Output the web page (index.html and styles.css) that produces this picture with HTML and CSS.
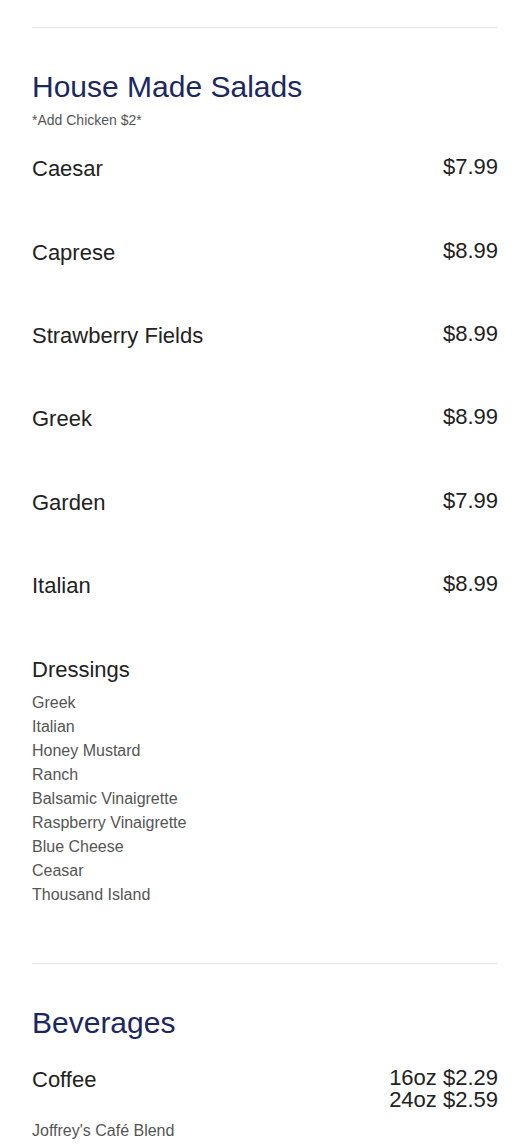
FILE: index.html
```html
<!DOCTYPE html>
<html lang="en">
<head>
  <meta charset="UTF-8">
  <meta name="viewport" content="width=device-width, initial-scale=1.0">
  <title>Menu</title>
  <link rel="stylesheet" href="styles.css">
</head>
<body>
  <div class="menu">
    <section class="menu-section">
      <div class="section-head">
        <h2 class="section-title">House Made Salads</h2>
        <p class="section-note">*Add Chicken $2*</p>
      </div>
      <div class="item">
        <div class="item-head"><h3 class="item-name">Caesar</h3><div class="item-price">$7.99</div></div>
      </div>
      <div class="item">
        <div class="item-head"><h3 class="item-name">Caprese</h3><div class="item-price">$8.99</div></div>
      </div>
      <div class="item">
        <div class="item-head"><h3 class="item-name">Strawberry Fields</h3><div class="item-price">$8.99</div></div>
      </div>
      <div class="item">
        <div class="item-head"><h3 class="item-name">Greek</h3><div class="item-price">$8.99</div></div>
      </div>
      <div class="item">
        <div class="item-head"><h3 class="item-name">Garden</h3><div class="item-price">$7.99</div></div>
      </div>
      <div class="item">
        <div class="item-head"><h3 class="item-name">Italian</h3><div class="item-price">$8.99</div></div>
      </div>
      <div class="item">
        <div class="item-head"><h3 class="item-name">Dressings</h3></div>
        <div class="item-desc">
          Greek<br>
          Italian<br>
          Honey Mustard<br>
          Ranch<br>
          Balsamic Vinaigrette<br>
          Raspberry Vinaigrette<br>
          Blue Cheese<br>
          Ceasar<br>
          Thousand Island
        </div>
      </div>
    </section>

    <section class="menu-section">
      <div class="section-head">
        <h2 class="section-title">Beverages</h2>
      </div>
      <div class="item">
        <div class="item-head">
          <h3 class="item-name">Coffee</h3>
          <div class="item-price">16oz $2.29<br>24oz $2.59</div>
        </div>
        <div class="item-desc">Joffrey's Café Blend</div>
      </div>
    </section>
  </div>
</body>
</html>
```

FILE: styles.css
```css
body {
  margin: 0;
  background: #fff;
  color: #222;
  font-family: "Liberation Sans", Arial, sans-serif;
}
.menu {
  padding: 27px 32px 0;
}
.menu-section {
  border-top: 1px solid #e4e4e4;
  padding-top: 41px;
}
.section-head {
  padding-bottom: 25.5px;
}
.section-title {
  margin: 0;
  font-size: 30px;
  font-weight: normal;
  line-height: 36px;
  color: #1b2761;
}
.section-note {
  margin: 7px 0 2px;
  font-size: 14px;
  line-height: 1.2;
  color: #555;
}
.item {
  padding-bottom: 57px;
}
.item:last-child {
  padding-bottom: 56px;
}
.item-head {
  display: flex;
  justify-content: space-between;
  align-items: flex-start;
}
.item-name {
  margin: 0;
  font-size: 22px;
  font-weight: normal;
  line-height: 1.2;
  color: #222;
}
.item-price {
  font-size: 22px;
  line-height: 1;
  text-align: right;
  color: #222;
}
.item-desc {
  margin-top: 8px;
  font-size: 16px;
  line-height: 24px;
  color: #555;
}
```
